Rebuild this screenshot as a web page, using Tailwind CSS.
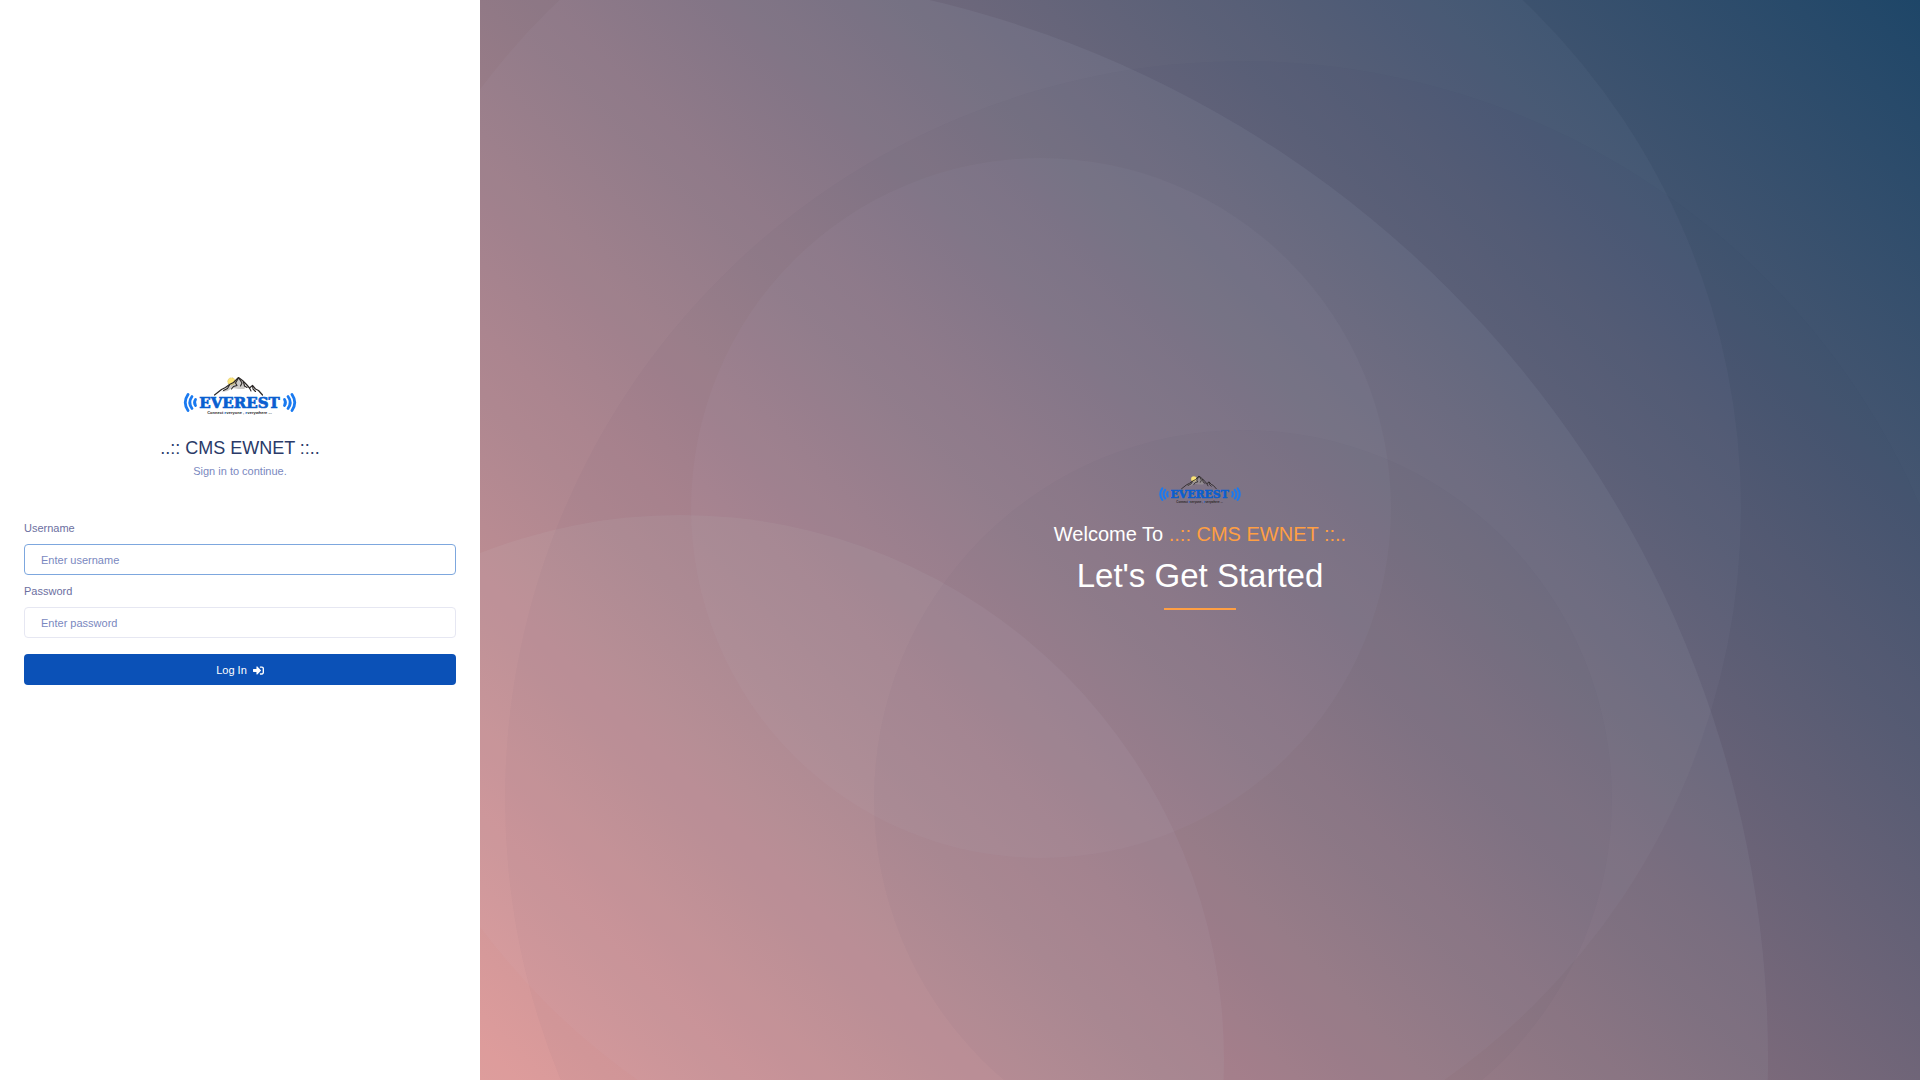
<!DOCTYPE html>
<html lang="en">
<head>
    <meta charset="UTF-8">
    <meta name="viewport" content="width=device-width, initial-scale=1.0">
    <title>..:: CMS EWNET ::..</title>
    <script src="https://cdn.jsdelivr.net/npm/@tailwindcss/browser@4"></script>
</head>
<body class="min-h-screen flex bg-white font-['Liberation_Sans',Arial,sans-serif] text-[11px] leading-4">
    <!-- Logo shared by both panels -->
    <svg class="hidden" aria-hidden="true">
        <symbol id="logo" viewBox="0 0 113 40">
            <circle cx="48" cy="5.5" r="3.8" fill="#fbe477" stroke="#b9a35a" stroke-width="0.5" stroke-dasharray="1 0.8" />
            <path d="M50 7 L55 1.5 L59 5 L62 9 L61 13 L55 13 L49 12 L44 15 L38 16 L46 10 Z" fill="#a39e9b" fill-opacity="0.55" />
            <g fill="none" stroke="#2b2726" stroke-linejoin="round" stroke-linecap="round">
                <path d="M31 19 L38 13.500 L42 11.500 L46 8.500 L50 6.500 L55 1.500 L59 4.500 L63 8.500 L66 12 L69 9.500 L72 13 L75 14.500 L79 19" stroke-width="1.2" />
                <path d="M55 2 L52 7 L53.500 9.500 L50 10.500 L48 13 M46 9 L44 12.500 L40 14.500 M56 3 L58.500 7 L57 10 M60 6 L61 10 L63.500 11.500 M69 10 L69.500 13 L72 15.500 M66 12 L67.500 15" stroke-width="1.1" />
            </g>
            <g fill="none" stroke="#1a7af0" stroke-width="2.8" stroke-linecap="round">
                <path d="M4.500 18.500 Q-1 26.500 4.500 34.500" />
                <path d="M8.500 20.500 Q4 26.500 8.500 32.500" />
                <path d="M12 23.500 Q10 26.500 12 29.500" />
                <path d="M108.500 18.500 Q114 26.500 108.500 34.500" />
                <path d="M104.500 20.500 Q109 26.500 104.500 32.500" />
                <path d="M101 23.500 Q103 26.500 101 29.500" />
            </g>
            <text x="56" y="32" text-anchor="middle" font-family="DejaVu Serif, serif" font-weight="bold" font-size="15" fill="#0a5fd0" stroke="#0a5fd0" stroke-width="0.7">EVEREST</text>
            <text x="56" y="38" text-anchor="middle" font-family="Liberation Sans, sans-serif" font-weight="bold" font-size="4" fill="#2b2726">Connect <tspan fill="#0a5fd0">e</tspan>veryone , <tspan fill="#0a5fd0">e</tspan>verywhere ...</text>
        </symbol>
    </svg>

    <!-- Login form -->
    <main class="w-1/4 shrink-0 flex flex-col justify-center px-6 pb-5">
        <div class="text-center">
            <svg class="mx-auto w-[114px] h-10" role="img" aria-label="Everest"><use href="#logo" /></svg>
            <h1 class="mt-5 text-lg leading-6 text-[#2a3a68]">..:: CMS EWNET ::..</h1>
            <p class="mt-[3px] text-[#7a88c0]">Sign in to continue.</p>
        </div>
        <form class="mt-[41px]">
            <label for="username" class="block mb-2 text-[#6c6f9f]">Username</label>
            <input id="username" type="text" placeholder="Enter username" class="block w-full px-4 pt-[7px] pb-[5px] leading-[17px] rounded border border-[#7da7de] text-[#495057] placeholder:text-[#7a88c0] outline-none">
            <label for="password" class="block mt-2 mb-2 text-[#6c6f9f]">Password</label>
            <input id="password" type="password" placeholder="Enter password" class="block w-full px-4 pt-[7px] pb-[5px] leading-[17px] rounded border border-[#e6e7f2] text-[#495057] placeholder:text-[#7a88c0] outline-none focus:border-[#7da7de]">
            <button type="submit" class="mt-4 w-full pt-2 pb-1.5 leading-[17px] flex items-center justify-center gap-1.5 rounded bg-[#0b51b7] text-white cursor-pointer">
                Log In
                <svg class="w-[11px] h-[11px]" viewBox="0 0 512 512" fill="currentColor" aria-hidden="true"><path d="M416 448h-84c-6.600 0-12-5.400-12-12v-40c0-6.600 5.400-12 12-12h84c17.700 0 32-14.300 32-32V160c0-17.700-14.300-32-32-32h-84c-6.600 0-12-5.400-12-12V76c0-6.600 5.400-12 12-12h84c53 0 96 43 96 96v192c0 53-43 96-96 96zm-47-209L201 71c-15-15-41-4.500-41 17v96H24c-13.300 0-24 10.700-24 24v96c0 13.300 10.700 24 24 24h136v96c0 21.500 26 32 41 17l168-168c9.300-9.400 9.300-24.600 0-34z" /></svg>
            </button>
        </form>
    </main>

    <!-- Welcome panel -->
    <section class="relative flex-1 flex flex-col items-center justify-center overflow-hidden pt-1 bg-[linear-gradient(45deg,#e09390,#1e4668)] text-white text-center">
        <svg class="absolute inset-0 w-full h-full" viewBox="0 0 1440 1080" preserveAspectRatio="xMidYMid slice" aria-hidden="true">
            <g fill="#e4e8f8" fill-opacity="0.06">
                <circle cx="200" cy="1059" r="1088" />
                <circle cx="200" cy="1059" r="544" />
            </g>
            <g fill="#e4e8f8" fill-opacity="0.035">
                <circle cx="561" cy="508" r="700" />
                <circle cx="561" cy="508" r="350" />
            </g>
            <g fill="#182840" fill-opacity="0.025">
                <circle cx="763" cy="799" r="738" />
                <circle cx="763" cy="799" r="369" />
            </g>
        </svg>
        <div class="relative flex flex-col items-center">
            <svg class="w-[82px] h-[29px]" role="img" aria-label="Everest"><use href="#logo" /></svg>
            <h2 class="mt-4 text-xl leading-7">Welcome To <span class="text-[#ff9f43]">..:: CMS EWNET ::..</span></h2>
            <p class="mt-2 text-[33px] leading-10">Let's Get Started</p>
            <div class="mt-3 w-[72px] h-[2px] bg-[#ff9f43]"></div>
        </div>
    </section>
</body>
</html>
